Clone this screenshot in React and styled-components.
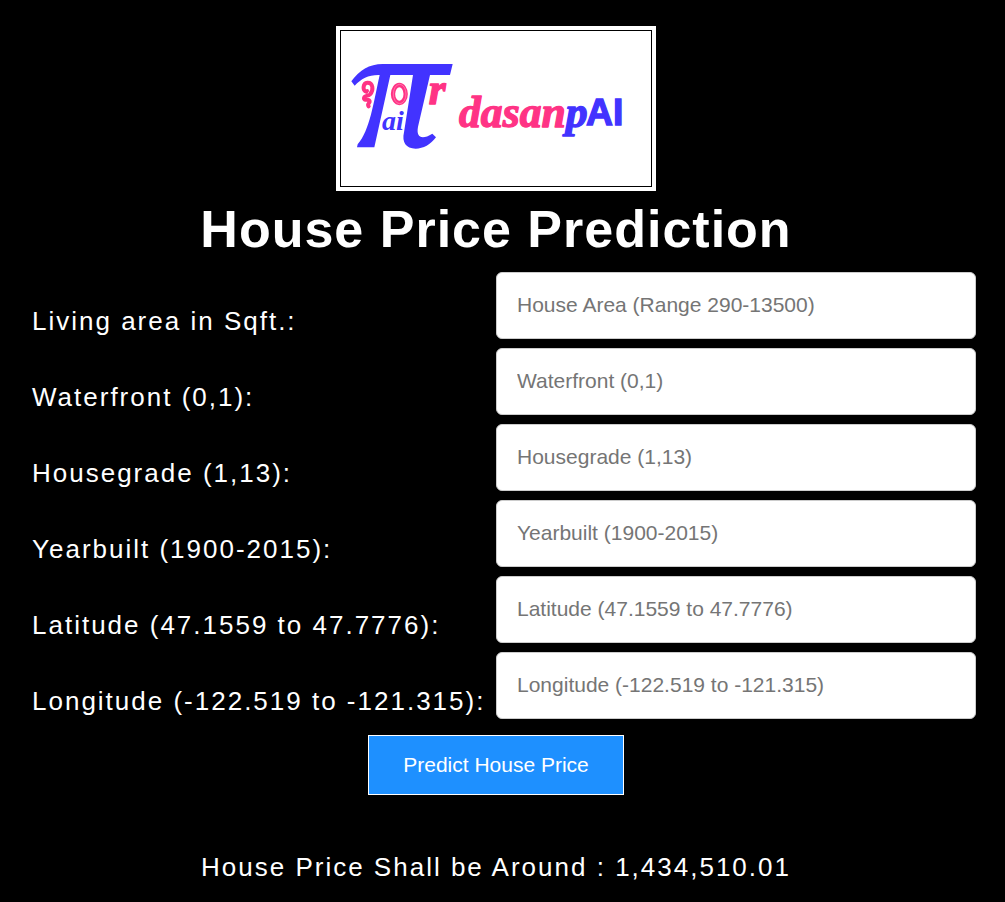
import React from "react";
import styled, { createGlobalStyle } from "styled-components";

const GlobalStyle = createGlobalStyle`
  * { box-sizing: border-box; }
  body {
    margin: 0;
    background: #000;
    color: #fff;
    font-family: "Liberation Sans", Arial, sans-serif;
  }
`;

const Page = styled.main`
  padding: 26px 29px 16px 16px;
  display: flex;
  flex-direction: column;
  align-items: center;
`;

const LogoFrame = styled.div`
  padding: 4px;
  background: #fff;
`;

const LogoArt = styled.svg`
  display: block;
  width: 312px;
  height: 157px;
  border: 1px solid #000;
`;

const Script = styled.text`
  font-family: "Liberation Serif", serif;
  font-style: italic;
  font-weight: bold;
  stroke-width: 4px;
  stroke-linejoin: round;
`;

const Title = styled.h1`
  margin: 8px 0 12px;
  font-size: 52px;
  line-height: 61px;
  letter-spacing: 1px;
  text-align: center;
`;

const Form = styled.form`
  width: 100%;
  display: flex;
  flex-direction: column;
  align-items: center;
  gap: 16px;
`;

const Fields = styled.div`
  width: 100%;
  display: grid;
  gap: 9px;
`;

const Field = styled.div`
  display: grid;
  grid-template-columns: 1fr 1fr;
  align-items: end;
`;

const Label = styled.label`
  padding: 0 0 3px 16px;
  font-size: 26px;
  line-height: 30px;
  letter-spacing: 2px;
  white-space: nowrap;
`;

const Input = styled.input`
  width: 100%;
  height: 67px;
  padding: 0 20px 1px;
  border: 1px solid #ccc;
  border-radius: 6px;
  background: #fff;
  color: #000;
  font: 21px "Liberation Sans", Arial, sans-serif;

  &::placeholder {
    color: #757575;
    opacity: 1;
  }
`;

const Submit = styled.button`
  height: 60px;
  padding: 0 34px;
  border: 1px solid #fff;
  background: #1e90ff;
  color: #fff;
  font: 21px "Liberation Sans", Arial, sans-serif;
  cursor: pointer;
`;

const Result = styled.p`
  margin: 57px 0 0;
  font-size: 26px;
  line-height: 30px;
  letter-spacing: 2px;
  text-align: center;
`;

const BLUE = "#4233ff";
const PINK = "#ff3385";

const fields = [
  ["area", "Living area in Sqft.:", "House Area (Range 290-13500)"],
  ["waterfront", "Waterfront (0,1):", "Waterfront (0,1)"],
  ["grade", "Housegrade (1,13):", "Housegrade (1,13)"],
  ["year", "Yearbuilt (1900-2015):", "Yearbuilt (1900-2015)"],
  ["latitude", "Latitude (47.1559 to 47.7776):", "Latitude (47.1559 to 47.7776)"],
  ["longitude", "Longitude (-122.519 to -121.315):", "Longitude (-122.519 to -121.315)"],
];

function Logo() {
  return (
    <LogoFrame>
      <LogoArt viewBox="33 33 930 465" role="img" aria-label="dasanpAI">
        <path
          d="M109 215C97 213 98 189 112 188C129 187 132 210 120 223C113 230 101 226 102 236C104 243 117 236 119 244C120 250 110 252 116 259"
          fill="none"
          stroke={PINK}
          strokeWidth="12"
          strokeLinecap="round"
          strokeLinejoin="round"
        />
        <circle cx="112" cy="212" r="5" fill={PINK} />
        <ellipse cx="208" cy="222" rx="19" ry="27" fill="none" stroke={PINK} strokeWidth="13" />
        <ellipse cx="209" cy="222" rx="19" ry="29" fill="none" stroke="#ff8fbb" strokeWidth="2" />
        <Script x="296" y="252" fontSize="130" fill={PINK} stroke={PINK}>r</Script>
        <path
          d="M64 184C88 151 118 132 158 132H368L360 165H300L264 320C258 352 275 361 307 341L318 352C302 374 280 386 257 386C228 386 215 367 222 337L249 165H181L133 382H81L83 373C120 330 130 250 149 165C116 164 94 176 74 197Z"
          fill={BLUE}
        />
        <Script x="156" y="329" fontSize="84" fill={BLUE}>ai</Script>
        <Script x="387" y="321" fontSize="131" fill={PINK} stroke={PINK}>
          dasan<tspan fill={BLUE} stroke={BLUE}>p</tspan>
        </Script>
        <text x="768" y="315" fontSize="112" fontWeight="bold" fill={BLUE} stroke={BLUE} strokeWidth="4">
          AI
        </text>
      </LogoArt>
    </LogoFrame>
  );
}

export default function App() {
  return (
    <>
      <GlobalStyle />
      <Page>
        <Logo />
        <Title>House Price Prediction</Title>
        <Form onSubmit={(e) => e.preventDefault()}>
          <Fields>
            {fields.map(([id, label, hint]) => (
              <Field key={id}>
                <Label htmlFor={id}>{label}</Label>
                <Input id={id} name={id} type="text" placeholder={hint} />
              </Field>
            ))}
          </Fields>
          <Submit type="submit">Predict House Price</Submit>
        </Form>
        <Result>House Price Shall be Around : 1,434,510.01</Result>
      </Page>
    </>
  );
}
